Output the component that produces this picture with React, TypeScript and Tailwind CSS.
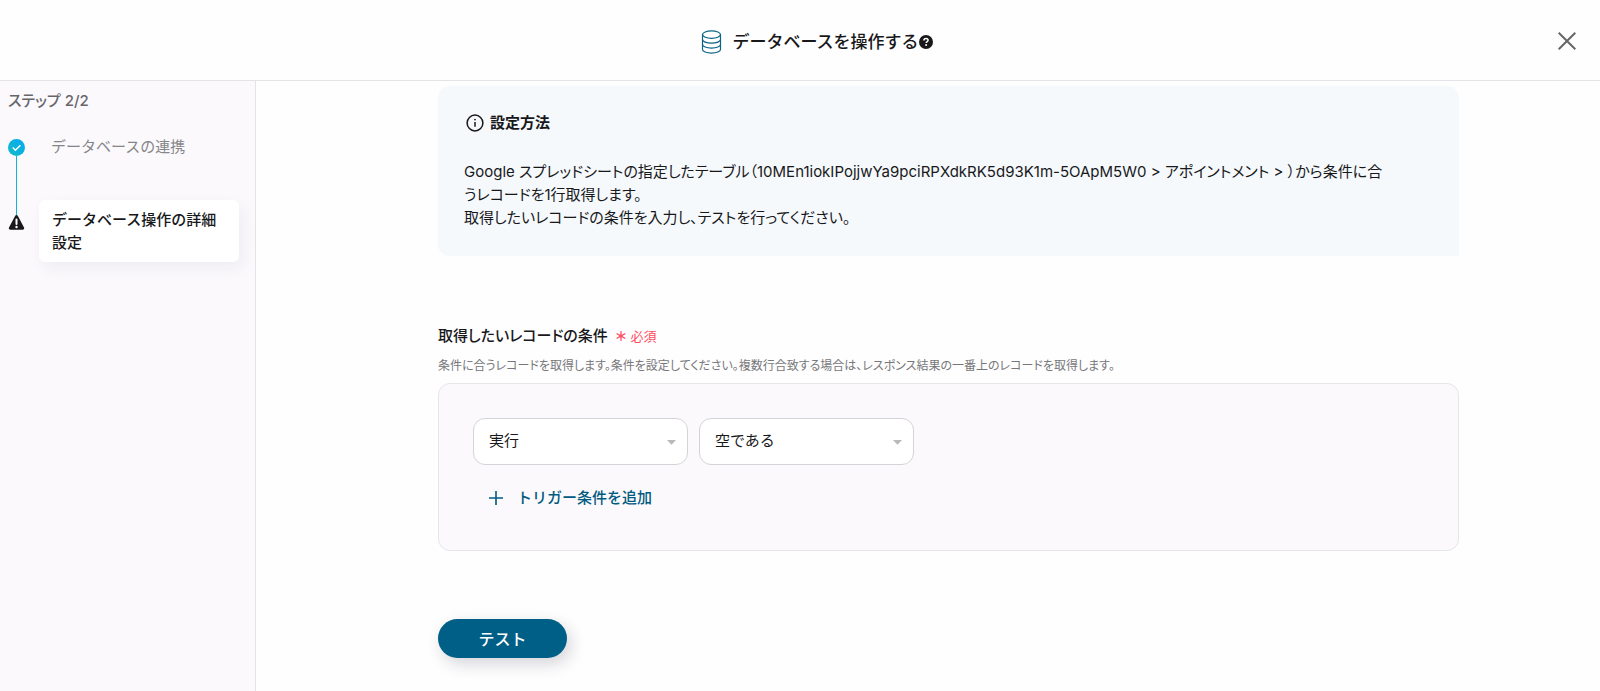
import { ReactNode } from "react";

function DatabaseIcon() {
  return (
    <svg width="22" height="24" viewBox="0 0 22 24" fill="none" stroke="#0b6484" strokeWidth="1.2" aria-hidden="true">
      <ellipse cx="10.500" cy="4.600" rx="9" ry="3.700" />
      <path d="M1.500 4.600v14.800c0 2 4 3.700 9 3.700s9-1.700 9-3.700V4.600" />
      <path d="M1.500 9.500c0 2 4 3.700 9 3.700s9-1.700 9-3.700" />
      <path d="M1.500 14.400c0 2 4 3.700 9 3.700s9-1.700 9-3.700" />
    </svg>
  );
}

function HelpIcon() {
  return (
    <svg width="14" height="14" viewBox="0 0 14 14" fill="none" aria-hidden="true">
      <circle cx="7" cy="7" r="7" fill="#18181b" />
      <path d="M4.900 5.400c0-1.300.9-2 2.100-2s2.100.7 2.100 1.800c0 1.400-1.900 1.400-1.900 2.700" stroke="#fff" strokeWidth="1.500" />
      <circle cx="7.100" cy="10.100" r="1" fill="#fff" />
    </svg>
  );
}

function CheckIcon() {
  return (
    <svg width="17" height="17" viewBox="0 0 17 17" fill="none" aria-hidden="true">
      <defs>
        <linearGradient id="done" x1="0" y1="1" x2="1" y2="0">
          <stop offset="0" stopColor="#12bcc4" />
          <stop offset="1" stopColor="#05a8f5" />
        </linearGradient>
      </defs>
      <circle cx="8.500" cy="8.500" r="8.500" fill="url(#done)" />
      <path d="M4.800 8.600l2.600 2.600 5-5" stroke="#fff" strokeWidth="1.400" />
    </svg>
  );
}

function WarningIcon() {
  return (
    <svg width="17" height="15" viewBox="0 0 17 15" aria-hidden="true">
      <path
        d="M7.200.8a1.500 1.500 0 0 1 2.600 0l6.200 11.600a1.600 1.600 0 0 1-1.400 2.400H2.400A1.600 1.600 0 0 1 1 12.400z"
        fill="#18181b"
      />
      <path d="M8.500 4.600v4.300" stroke="#fff" strokeWidth="2" strokeLinecap="round" />
      <circle cx="8.500" cy="12" r="1.200" fill="#fff" />
    </svg>
  );
}

function InfoIcon() {
  return (
    <svg width="18" height="18" viewBox="0 0 18 18" fill="none" stroke="#18181b" aria-hidden="true">
      <circle cx="9" cy="9" r="7.900" strokeWidth="1.500" />
      <path d="M9 8v4.800" strokeWidth="1.500" />
      <circle cx="9" cy="5.600" r=".9" fill="#18181b" stroke="none" />
    </svg>
  );
}

function SelectBox({ label, children }: { label: string; children: ReactNode }) {
  return (
    <div className="relative w-[215px]">
      <select
        aria-label={label}
        className="h-[47px] w-full appearance-none rounded-xl border border-[#d4d3d8] bg-white pr-8 pl-[15px] text-[15px] text-[#18181b]"
      >
        {children}
      </select>
      <svg
        className="pointer-events-none absolute top-[22px] right-3"
        width="9"
        height="5"
        viewBox="0 0 9 5"
        aria-hidden="true"
      >
        <path d="M0 0h9L4.500 4.800z" fill="#b9b8bd" />
      </svg>
    </div>
  );
}

export default function App() {
  return (
    <div className="flex min-h-screen flex-col bg-[#fefefe] font-['Inter','Noto_Sans_CJK_JP',sans-serif] text-[15px] text-[#18181b]">
      <header className="relative flex h-[81px] items-center justify-center border-b border-[#e4e4e7] pt-1 pl-[34px]">
        <h1 className="flex items-center text-[17px] leading-6 font-medium">
          <DatabaseIcon />
          <span className="ml-[9px]">データベースを操作する</span>
          <button type="button" aria-label="ヘルプ">
            <HelpIcon />
          </button>
        </h1>
        <button type="button" aria-label="閉じる" className="absolute top-8 right-6">
          <svg width="18" height="18" viewBox="0 0 18 18" stroke="#66666a" strokeWidth="2" aria-hidden="true">
            <path d="M.7.7l16.600 16.600M17.300.7L.7 17.300" />
          </svg>
        </button>
      </header>

      <div className="flex grow">
        <aside className="w-64 shrink-0 border-r border-[#e4e4e7] bg-[#fbf9fc] px-2 pt-2">
          <p className="leading-6 font-medium text-[#66666a] [font-feature-settings:'palt']">ステップ 2/2</p>
          <ol className="mt-[22px]">
            <li className="flex">
              <div className="mt-1 flex w-[17px] flex-col items-center">
                <CheckIcon />
                <div className="h-[59px] w-px bg-[#12b5da]" />
              </div>
              <a href="#connect" className="ml-[26px] leading-6 text-[#85858a]">
                データベースの連携
              </a>
            </li>
            <li className="-mt-[15px] flex items-start">
              <div className="mt-[15px]">
                <WarningIcon />
              </div>
              <a
                href="#detail"
                className="ml-[14px] w-[200px] rounded-md bg-white px-[13px] py-2 leading-[23px] font-medium shadow-[4px_6px_16px_rgba(30,30,60,0.06)]"
              >
                データベース操作の詳細設定
              </a>
            </li>
          </ol>
        </aside>

        <main className="min-w-0 grow pt-[5px] pr-[141px] pb-4 pl-[182px]">
          <section className="rounded-xl rounded-br-none bg-[#f5f9fc] px-[26px] pt-[25px] pb-[27px]">
            <h2 className="ml-[2px] flex items-center gap-[6px] leading-6 font-bold">
              <InfoIcon />
              設定方法
            </h2>
            <p className="mt-[25px] pr-[45px] leading-[23px] [font-feature-settings:'palt']">
              Google スプレッドシートの指定したテーブル（10MEn1iokIPojjwYa9pciRPXdkRK5d93K1m-5OApM5W0 &gt; アポイントメント &gt; ）から条件に合うレコードを1行取得します。
              <br />
              取得したいレコードの条件を入力し、テストを行ってください。
            </p>
          </section>

          <section className="mt-[68px]">
            <h2 className="flex items-center gap-2 leading-6 font-medium [font-feature-settings:'palt']">
              取得したいレコードの条件
              <span className="flex gap-1 text-[13px] font-normal text-[#ff4d5e]">
                <span className="font-bold">＊</span>必須
              </span>
            </h2>
            <p className="mt-2 text-xs leading-5 text-[#77777b] [font-feature-settings:'palt']">
              条件に合うレコードを取得します。条件を設定してください。複数行合致する場合は、レスポンス結果の一番上のレコードを取得します。
            </p>
            <div className="mt-[7px] rounded-xl border border-[#e6e5ea] bg-[#fbf9fc] px-[34px] pt-[34px] pb-10">
              <div className="flex gap-[11px]">
                <SelectBox label="項目">
                  <option>実行</option>
                </SelectBox>
                <SelectBox label="条件">
                  <option>空である</option>
                </SelectBox>
              </div>
              <button type="button" className="mt-[21px] ml-4 flex items-center gap-[14px] leading-6 font-medium text-[#005b80]">
                <svg width="14" height="14" viewBox="0 0 14 14" stroke="#005b80" strokeWidth="1.600" aria-hidden="true">
                  <path d="M7 0v14M0 7h14" />
                </svg>
                トリガー条件を追加
              </button>
            </div>
          </section>

          <button
            type="button"
            className="mt-[68px] h-[39px] w-[129px] rounded-full bg-[#005f86] text-base font-medium text-white shadow-[4px_6px_16px_rgba(30,30,60,0.18)]"
          >
            テスト
          </button>
        </main>
      </div>
    </div>
  );
}
